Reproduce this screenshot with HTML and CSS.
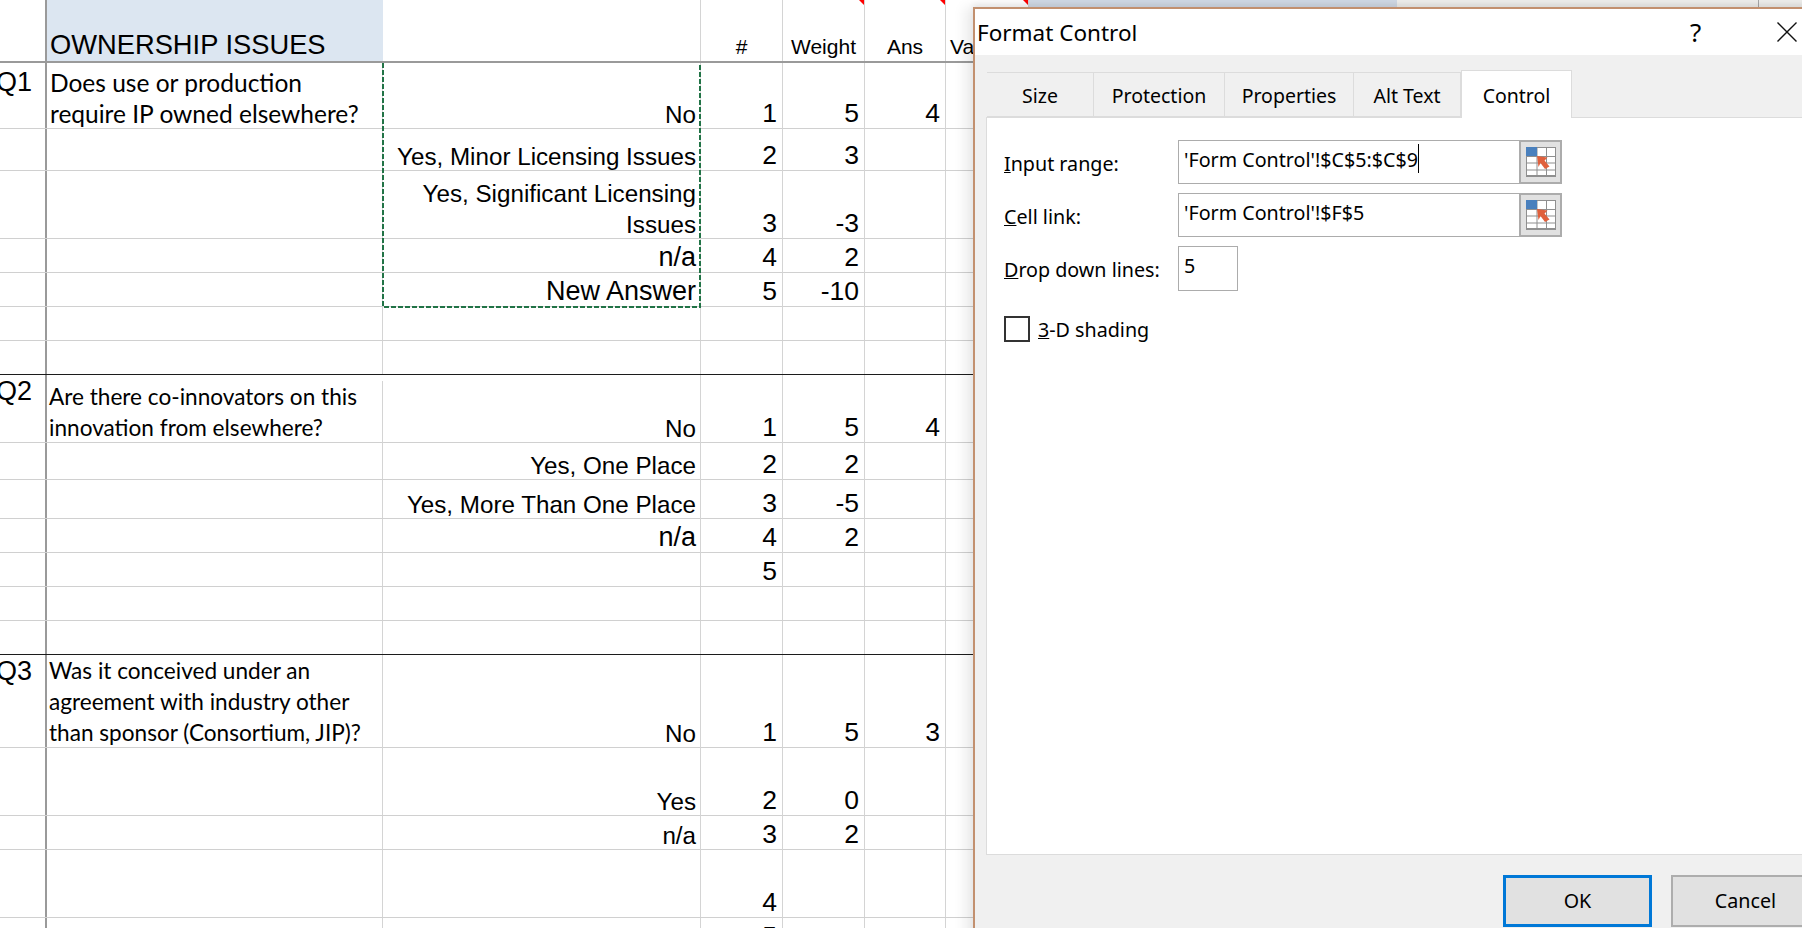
FILE: index.html
```html
<!DOCTYPE html>
<html lang="en">
<head>
<meta charset="utf-8">
<title>Format Control</title>
<link rel="stylesheet" href="styles.css">
</head>
<body>
<main class="screen">
  <section class="sheet">
    <div class="row r-head">
      <div class="c c0"></div>
      <div class="c c1 head-title">OWNERSHIP ISSUES</div>
      <div class="c c2"></div>
      <div class="c c3 lbl">#</div>
      <div class="c c4 lbl note">Weight</div>
      <div class="c c5 lbl note">Ans</div>
      <div class="c c6 lbl lbl-left note">Va</div>
      <div class="c c7 bands"><span class="band-blue"></span><span class="band-gray"></span><span class="band-rest"></span></div>
    </div>

    <div class="row r67">
      <div class="c c0 q">Q1</div>
      <div class="c c1 ask ask-q1">Does use or production<br>require IP owned elsewhere?</div>
      <div class="c c2 ans">No</div>
      <div class="c c3 num">1</div><div class="c c4 num">5</div><div class="c c5 num">4</div><div class="c c6"></div><div class="c c7"></div>
    </div>
    <div class="row r42">
      <div class="c c0"></div><div class="c c1"></div>
      <div class="c c2 ans">Yes, Minor Licensing Issues</div>
      <div class="c c3 num">2</div><div class="c c4 num">3</div><div class="c c5"></div><div class="c c6"></div><div class="c c7"></div>
    </div>
    <div class="row r68">
      <div class="c c0"></div><div class="c c1"></div>
      <div class="c c2 ans">Yes, Significant Licensing<br>Issues</div>
      <div class="c c3 num">3</div><div class="c c4 num">-3</div><div class="c c5"></div><div class="c c6"></div><div class="c c7"></div>
    </div>
    <div class="row r34">
      <div class="c c0"></div><div class="c c1"></div>
      <div class="c c2 ans big">n/a</div>
      <div class="c c3 num">4</div><div class="c c4 num">2</div><div class="c c5"></div><div class="c c6"></div><div class="c c7"></div>
    </div>
    <div class="row r34">
      <div class="c c0"></div><div class="c c1"></div>
      <div class="c c2 ans big">New Answer</div>
      <div class="c c3 num">5</div><div class="c c4 num">-10</div><div class="c c5"></div><div class="c c6"></div><div class="c c7"></div>
    </div>
    <div class="row r34"><div class="c c0"></div><div class="c c1"></div><div class="c c2"></div><div class="c c3"></div><div class="c c4"></div><div class="c c5"></div><div class="c c6"></div><div class="c c7"></div></div>
    <div class="row r34 line-black"><div class="c c0"></div><div class="c c1"></div><div class="c c2"></div><div class="c c3"></div><div class="c c4"></div><div class="c c5"></div><div class="c c6"></div><div class="c c7"></div></div>

    <div class="row r68">
      <div class="c c0 q q-top">Q2</div>
      <div class="c c1 ask ask-q2">Are there co-innovators on this<br>innovation from elsewhere?</div>
      <div class="c c2 ans">No</div>
      <div class="c c3 num">1</div><div class="c c4 num">5</div><div class="c c5 num">4</div><div class="c c6"></div><div class="c c7"></div>
    </div>
    <div class="row r37">
      <div class="c c0"></div><div class="c c1"></div>
      <div class="c c2 ans">Yes, One Place</div>
      <div class="c c3 num">2</div><div class="c c4 num">2</div><div class="c c5"></div><div class="c c6"></div><div class="c c7"></div>
    </div>
    <div class="row r39">
      <div class="c c0"></div><div class="c c1"></div>
      <div class="c c2 ans">Yes, More Than One Place</div>
      <div class="c c3 num">3</div><div class="c c4 num">-5</div><div class="c c5"></div><div class="c c6"></div><div class="c c7"></div>
    </div>
    <div class="row r34">
      <div class="c c0"></div><div class="c c1"></div>
      <div class="c c2 ans big">n/a</div>
      <div class="c c3 num">4</div><div class="c c4 num">2</div><div class="c c5"></div><div class="c c6"></div><div class="c c7"></div>
    </div>
    <div class="row r34">
      <div class="c c0"></div><div class="c c1"></div><div class="c c2"></div>
      <div class="c c3 num">5</div><div class="c c4"></div><div class="c c5"></div><div class="c c6"></div><div class="c c7"></div>
    </div>
    <div class="row r34"><div class="c c0"></div><div class="c c1"></div><div class="c c2"></div><div class="c c3"></div><div class="c c4"></div><div class="c c5"></div><div class="c c6"></div><div class="c c7"></div></div>
    <div class="row r34 line-black"><div class="c c0"></div><div class="c c1"></div><div class="c c2"></div><div class="c c3"></div><div class="c c4"></div><div class="c c5"></div><div class="c c6"></div><div class="c c7"></div></div>

    <div class="row r93">
      <div class="c c0 q q-top">Q3</div>
      <div class="c c1 ask ask-q2">Was it conceived under an<br>agreement with industry other<br>than sponsor (Consortium, JIP)?</div>
      <div class="c c2 ans">No</div>
      <div class="c c3 num">1</div><div class="c c4 num">5</div><div class="c c5 num">3</div><div class="c c6"></div><div class="c c7"></div>
    </div>
    <div class="row r68">
      <div class="c c0"></div><div class="c c1"></div>
      <div class="c c2 ans">Yes</div>
      <div class="c c3 num">2</div><div class="c c4 num">0</div><div class="c c5"></div><div class="c c6"></div><div class="c c7"></div>
    </div>
    <div class="row r34">
      <div class="c c0"></div><div class="c c1"></div>
      <div class="c c2 ans">n/a</div>
      <div class="c c3 num">3</div><div class="c c4 num">2</div><div class="c c5"></div><div class="c c6"></div><div class="c c7"></div>
    </div>
    <div class="row r68">
      <div class="c c0"></div><div class="c c1"></div><div class="c c2"></div>
      <div class="c c3 num">4</div><div class="c c4"></div><div class="c c5"></div><div class="c c6"></div><div class="c c7"></div>
    </div>
    <div class="row r34">
      <div class="c c0"></div><div class="c c1"></div><div class="c c2"></div>
      <div class="c c3 num">5</div><div class="c c4"></div><div class="c c5"></div><div class="c c6"></div><div class="c c7"></div>
    </div>
    <svg class="marching" viewBox="0 0 320 245" aria-hidden="true"><path d="M1 0 V244 H318 V0"/></svg>
  </section>

  <section class="dialog" aria-label="Format Control">
    <header class="titlebar">
      <h1 class="title">Format Control</h1>
      <span class="help">?</span>
      <svg class="close" viewBox="0 0 20 20" aria-hidden="true"><path d="M0.5 0.5 L19.5 19.5 M19.5 0.5 L0.5 19.5"/></svg>
    </header>
    <div class="body">
      <nav class="tabs">
        <span class="tab t-size">Size</span>
        <span class="tab t-prot">Protection</span>
        <span class="tab t-prop">Properties</span>
        <span class="tab t-alt">Alt Text</span>
        <span class="tab t-ctl active">Control</span>
      </nav>
      <div class="panel">
        <div class="field">
          <span class="flabel"><u>I</u>nput range:</span>
          <span class="input wide">'Form Control'!$C$5:$C$9<i class="caret"></i></span>
          <span class="picker">
            <svg viewBox="0 0 30 30" class="grid-ico" aria-hidden="true">
              <path class="g" d="M0.5 0v30M11 0v30M20.5 0v30M29.5 0v30M0 .5h30M0 9.5h30M0 16h30M0 23h30"/>
              <path class="gb" d="M0 29h30"/>
              <rect class="blue" x="0" y="0" width="11" height="9"/>
              <path class="arrow" d="M11 9 L21.5 10.5 L18.5 13.5 L23.5 19.5 L19 22 L14.5 16 L12.5 20 Z"/>
            </svg>
          </span>
        </div>
        <div class="field">
          <span class="flabel"><u>C</u>ell link:</span>
          <span class="input wide">'Form Control'!$F$5</span>
          <span class="picker">
            <svg viewBox="0 0 30 30" class="grid-ico" aria-hidden="true">
              <path class="g" d="M0.5 0v30M11 0v30M20.5 0v30M29.5 0v30M0 .5h30M0 9.5h30M0 16h30M0 23h30"/>
              <path class="gb" d="M0 29h30"/>
              <rect class="blue" x="0" y="0" width="11" height="9"/>
              <path class="arrow" d="M11 9 L21.5 10.5 L18.5 13.5 L23.5 19.5 L19 22 L14.5 16 L12.5 20 Z"/>
            </svg>
          </span>
        </div>
        <div class="field">
          <span class="flabel"><u>D</u>rop down lines:</span>
          <span class="input narrow">5</span>
        </div>
        <div class="check">
          <span class="box"></span>
          <span class="flabel"><u>3</u>-D shading</span>
        </div>
      </div>
      <footer class="buttons">
        <span class="btn ok">OK</span>
        <span class="btn">Cancel</span>
      </footer>
    </div>
  </section>
</main>
</body>
</html>
```

FILE: styles.css
```css
* { box-sizing: border-box; }
html, body { margin: 0; padding: 0; height: 100%; overflow: hidden; background: #fff; }
.screen { position: relative; width: 1802px; height: 928px; overflow: hidden; color: #000; }

/* Sheet */
.sheet { position: relative; width: 1802px; font-family: "Liberation Sans", Arial, sans-serif; }
.row { display: grid; grid-template-columns: 47px 336px 318px 82px 82px 81px 83px 1fr; border-bottom: 1px solid #d0d0d0; }
.r-head { height: 63px; border-bottom: 2px solid #9a9a9a; }
.r67 { height: 66px; }
.r42 { height: 42px; }
.r68 { height: 68px; }
.r34 { height: 34px; }
.r37 { height: 37px; }
.r39 { height: 39px; }
.r93 { height: 93px; }
.line-black { border-bottom-color: #1c1c1c; }

.c { position: relative; display: flex; align-items: flex-end; min-width: 0; white-space: nowrap; border-right: 1px solid #d4d4d4; }
.c0 { border-right: 2px solid #9a9a9a; }
.c7 { border-right: 0; }

.bands { align-items: flex-start; }
.band-blue { width: 368px; height: 8px; flex: none; background: #d2dbe7; }
.band-gray { width: 362px; height: 8px; flex: none; background: #f0f0ee; border-right: 1px solid #a8a8a8; }
.band-rest { flex: 1; height: 8px; background: #f0f0ee; }

.head-title { background: #dce6f1; font-size: 27.3px; line-height: 30px; padding: 0 0 1px 3px; border-right: 0; }
.lbl { justify-content: center; font-size: 21px; line-height: 24px; padding-bottom: 2px; }
.lbl-left { justify-content: flex-start; padding-left: 4px; }
.note::after { content: ""; position: absolute; top: 0; right: 0; width: 5px; height: 5px; background: #f00; clip-path: polygon(0 0, 100% 0, 100% 100%); }

.q { font-size: 27px; line-height: 30px; align-items: flex-start; padding-top: 4px; margin-left: -4px; }
.q-top { padding-top: 1px; }

.ask { display: block; align-self: end; font-family: Lato, sans-serif; color: #000; white-space: nowrap; }
.ask-q1 { font-size: 24.5px; line-height: 31px; padding-left: 3px; margin-bottom: -1px; }
.ask-q2 { font-size: 22.6px; line-height: 31px; padding-left: 2px; margin-bottom: -1px; }

.ans { justify-content: flex-end; text-align: right; font-size: 24.2px; line-height: 31px; padding: 0 4px 0 0; margin-bottom: -2px; }
.big { font-size: 27px; margin-bottom: -1px; }

.num { justify-content: flex-end; font-size: 26.5px; line-height: 31px; padding-right: 5px; margin-bottom: -1px; }

.marching { position: absolute; left: 382px; top: 63px; width: 320px; height: 245px; fill: none; }
.marching path { stroke: #217346; stroke-width: 2; stroke-dasharray: 5 2; fill: none; }

/* Dialog */
.dialog { position: absolute; left: 973px; top: 7px; width: 900px; height: 940px; display: flex; flex-direction: column; background: #fff; border: 2px solid #c2906f; box-shadow: -8px 0 12px rgba(0,0,0,.08), 0 -4px 6px rgba(0,0,0,.06); font-family: "Noto Sans", "Open Sans", sans-serif; color: #000; }
.titlebar { flex: none; height: 46px; display: flex; align-items: center; padding-left: 2px; }
.title { margin: 0; font-size: 22.5px; font-weight: 400; width: 713px; }
.help { font-size: 26px; width: 0; }
.close { width: 20px; height: 20px; margin-left: 87px; }
.close path { stroke: #111; stroke-width: 1.4; fill: none; }

.body { flex: 1; display: flex; flex-direction: column; background: #f0f0f0; min-height: 0; }
.tabs { flex: none; display: flex; align-items: flex-end; height: 62px; padding-left: 12px; }
.tab { height: 45px; display: flex; align-items: center; justify-content: center; font-size: 19.5px; padding-top: 2px; border-top: 1px solid #dcdcdc; border-right: 1px solid #dcdcdc; border-bottom: 1px solid #dcdcdc; }
.t-size { width: 107px; }
.t-prot { width: 131px; }
.t-prop { width: 129px; }
.t-alt { width: 107px; }
.t-ctl { width: 111px; }
.tab.active { height: 48px; background: #fff; border-left: 1px solid #dcdcdc; border-bottom: 0; position: relative; top: 1px; }

.panel { height: 738px; flex: none; margin-left: 11px; background: #fff; border-left: 1px solid #dcdcdc; border-top: 1px solid #dcdcdc; border-bottom: 1px solid #dcdcdc; padding: 22px 0 0 17px; display: flex; flex-direction: column; gap: 9px; }
.field { display: flex; align-items: center; height: 44px; }
.flabel { font-size: 19.7px; white-space: nowrap; }
.field .flabel { width: 174px; flex: none; padding-top: 2px; }
.input { height: 44px; border: 1px solid #acacac; background: #fff; font-size: 19.7px; padding: 5px 0 0 5px; display: block; line-height: 28px; flex: none; }
.wide { width: 342px; }
.narrow { width: 60px; height: 45px; padding-top: 5px; }
.caret { display: inline-block; width: 1px; height: 29px; margin-top: -2px; background: #000; vertical-align: top; }
.picker { width: 43px; height: 44px; flex: none; margin-left: -1px; background: #e1e1e1; border: 2px solid #acacac; display: flex; align-items: center; justify-content: center; }
.grid-ico { width: 30px; height: 30px; overflow: visible; background: #fff; }
.grid-ico .g { stroke: #8f8f8f; stroke-width: 1; fill: none; }
.grid-ico .gb { stroke: #8f8f8f; stroke-width: 2; fill: none; }
.blue { fill: #4a80bd; }
.arrow { fill: #e0603c; }
.check { display: flex; align-items: center; gap: 8px; margin-top: 16px; height: 28px; }
.box { width: 26px; height: 26px; border: 2px solid #333; background: #fff; flex: none; }

.buttons { flex: 1; display: flex; gap: 19px; padding: 20px 0 0 528px; }
.btn { width: 149px; height: 52px; flex: none; background: #e1e1e1; border: 2px solid #adadad; display: flex; align-items: center; justify-content: center; font-size: 19.7px; padding-bottom: 2px; }
.btn.ok { border: 3px solid #0078d7; }
```
